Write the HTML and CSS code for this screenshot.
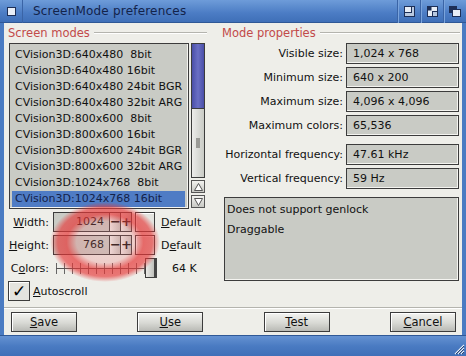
FILE: index.html
```html
<!DOCTYPE html>
<html lang="en">
<head>
    <meta charset="UTF-8">
    <title>ScreenMode preferences</title>
    <link rel="stylesheet" href="styles.css">
</head>
<body>
<div class="window">
    <div class="titlebar">
        <div class="gadget close"><span></span></div>
        <div class="title">ScreenMode preferences</div>
        <div class="gadget">
            <svg width="11" height="11" viewBox="0 0 11 11"><rect x="0.5" y="0.5" width="10" height="10" fill="#b9c9e0" stroke="#1d2f57"/><rect x="0.5" y="0.5" width="7" height="6" fill="#e8eef7" stroke="#1d2f57"/></svg>
        </div>
        <div class="gadget">
            <svg width="11" height="11" viewBox="0 0 11 11"><rect x="0.5" y="0.5" width="10" height="10" fill="#e8eef7" stroke="#1d2f57"/><rect x="0.5" y="0.5" width="4" height="4" fill="#1d2f57"/><rect x="5.5" y="5.5" width="5" height="5" fill="#b9c9e0" stroke="#1d2f57"/></svg>
        </div>
        <div class="gadget">
            <svg width="12" height="11" viewBox="0 0 12 11"><rect x="0.5" y="0.5" width="7" height="6" fill="#1d2f57" stroke="#1d2f57"/><rect x="3.5" y="3.5" width="8" height="7" fill="#e8eef7" stroke="#1d2f57"/></svg>
        </div>
    </div>

    <div class="content">
        <div class="columns">
            <div class="col-left">
                <div class="group-title"><span>Screen modes</span></div>
                <div class="list-wrap">
                    <ul class="modes">
                        <li>CVision3D:640x480&nbsp;&nbsp;8bit</li>
                        <li>CVision3D:640x480 16bit</li>
                        <li>CVision3D:640x480 24bit BGR</li>
                        <li>CVision3D:640x480 32bit ARG</li>
                        <li>CVision3D:800x600&nbsp;&nbsp;8bit</li>
                        <li>CVision3D:800x600 16bit</li>
                        <li>CVision3D:800x600 24bit BGR</li>
                        <li>CVision3D:800x600 32bit ARG</li>
                        <li>CVision3D:1024x768&nbsp;&nbsp;8bit</li>
                        <li class="selected">CVision3D:1024x768 16bit</li>
                    </ul>
                    <div class="scroller">
                        <div class="track">
                            <div class="knob"><span class="grip"></span></div>
                        </div>
                        <div class="arrow">
                            <svg width="11" height="10" viewBox="0 0 11 10"><path d="M5.5 1.5 L9.5 8.5 L1.5 8.5 Z" fill="#fff" stroke="#555"/></svg>
                        </div>
                        <div class="arrow">
                            <svg width="11" height="10" viewBox="0 0 11 10"><path d="M1.5 1.5 L9.5 1.5 L5.5 8.5 Z" fill="#fff" stroke="#555"/></svg>
                        </div>
                    </div>
                </div>

                <div class="field-row">
                    <label class="field-label"><u>W</u>idth:</label>
                    <div class="number-box">1024</div>
                    <div class="step">&minus;</div>
                    <div class="step">+</div>
                    <div class="small-box"></div>
                    <span class="default-text"><u>D</u>efault</span>
                </div>
                <div class="field-row">
                    <label class="field-label"><u>H</u>eight:</label>
                    <div class="number-box">768</div>
                    <div class="step">&minus;</div>
                    <div class="step">+</div>
                    <div class="small-box"></div>
                    <span class="default-text">D<u>e</u>fault</span>
                </div>
                <div class="field-row">
                    <label class="field-label">C<u>o</u>lors:</label>
                    <div class="slider">
                        <div class="ticks"></div>
                        <div class="slider-knob"></div>
                    </div>
                    <span class="colors-value">64 K</span>
                </div>
                <div class="check-row">
                    <div class="checkbox">&#10003;</div>
                    <span><u>A</u>utoscroll</span>
                </div>
            </div>

            <div class="col-right">
                <div class="group-title"><span>Mode properties</span></div>
                <div class="props">
                    <div class="prop"><span class="prop-label">Visible size:</span><div class="prop-value">1,024 x 768</div></div>
                    <div class="prop"><span class="prop-label">Minimum size:</span><div class="prop-value">640 x 200</div></div>
                    <div class="prop"><span class="prop-label">Maximum size:</span><div class="prop-value">4,096 x 4,096</div></div>
                    <div class="prop"><span class="prop-label">Maximum colors:</span><div class="prop-value">65,536</div></div>
                </div>
                <div class="props freq">
                    <div class="prop"><span class="prop-label">Horizontal frequency:</span><div class="prop-value">47.61 kHz</div></div>
                    <div class="prop"><span class="prop-label">Vertical frequency:</span><div class="prop-value">59 Hz</div></div>
                </div>
                <div class="info-box">
                    <p>Does not support genlock</p>
                    <p>Draggable</p>
                </div>
            </div>
        </div>

        <div class="buttons">
            <button class="btn"><u>S</u>ave</button>
            <button class="btn"><u>U</u>se</button>
            <button class="btn"><u>T</u>est</button>
            <button class="btn"><u>C</u>ancel</button>
        </div>
    </div>

    <div class="bottom-bar">
        <svg class="sizer" width="12" height="12" viewBox="0 0 12 12">
            <path d="M11 2 L2 11 M11 5 L5 11 M11 8 L8 11" stroke="#e6eef8" stroke-width="1.2"/>
            <path d="M11 3 L3 11 M11 6 L6 11 M11 9 L9 11" stroke="#1d2f57" stroke-width="0.8"/>
        </svg>
    </div>

    <!-- red highlight ring drawn over the screenshot -->
    <div class="ring"></div>
</div>
</body>
</html>
```

FILE: styles.css
```css
* {
    margin: 0;
    padding: 0;
    box-sizing: border-box;
}

body {
    font-family: "DejaVu Sans", sans-serif;
    font-size: 11px;
    color: #111;
    background: #4a7bc2;
}

.window {
    position: relative;
    width: 466px;
    height: 356px;
    overflow: hidden;
    background: #4a7bc2;
}

.titlebar {
    height: 23px;
    display: flex;
    align-items: center;
    background: linear-gradient(#6e9cd9, #4b7cc4 60%, #3f6fb8);
    border-bottom: 1px solid #2f5896;
}

.gadget {
    width: 23px;
    height: 23px;
    display: flex;
    align-items: center;
    justify-content: center;
    border-left: 1px solid #3a64a6;
    box-shadow: inset 1px 0 0 #7aa4dc;
}

.gadget.close {
    border-left: none;
    box-shadow: none;
    border-right: 1px solid #3a64a6;
}

.gadget.close span {
    width: 9px;
    height: 9px;
    background: #e8eef7;
    border: 1px solid #1d2f57;
}

.title {
    flex: 1;
    padding-left: 10px;
    font-size: 12px;
    color: #13234a;
    letter-spacing: 0.2px;
}

.content {
    height: 312px;
    margin: 0 4px;
    background: #eeeee9;
    display: flex;
    flex-direction: column;
}

.columns {
    display: flex;
    height: 281px;
    padding: 3px 0 0 4px;
    gap: 15px;
}

.col-left {
    width: 199px;
}

.col-right {
    width: 238px;
}

.group-title {
    height: 14px;
    line-height: 14px;
    display: flex;
    align-items: center;
    color: #c24a4a;
    font-size: 11.5px;
}

.group-title::after {
    content: "";
    flex: 1;
    height: 0;
    margin-left: 4px;
    border-top: 1px solid #b4b4ae;
    border-bottom: 1px solid #ffffff;
}

/* mode list */

.list-wrap {
    display: flex;
    gap: 2px;
    margin: 3px 0 0 1px;
}

.modes {
    list-style: none;
    width: 180px;
    height: 166px;
    padding: 3px 3px 1px 2px;
    background: #c9cbc5;
    border: 1px solid #3c3c3c;
    box-shadow: inset -1px -1px 0 #f4f4f0;
}

.modes li {
    height: 16px;
    line-height: 16px;
    padding-left: 3px;
    white-space: nowrap;
}

.modes li.selected {
    background: #4f7cc5;
    color: #14224a;
}

.scroller {
    width: 14px;
    display: flex;
    flex-direction: column;
    gap: 2px;
}

.track {
    height: 135px;
    display: flex;
    flex-direction: column;
    justify-content: flex-end;
    background: linear-gradient(90deg, #4a4fa8, #6a6fc4 50%, #4a4fa8);
    border: 1px solid #3c3c3c;
}

.knob {
    height: 69px;
    display: flex;
    align-items: center;
    justify-content: center;
    background: linear-gradient(90deg, #ececea, #c9cbc5);
    border-top: 1px solid #3c3c3c;
}

.grip {
    width: 4px;
    height: 10px;
    background-image: radial-gradient(circle, #9a9a96 0.8px, transparent 1px);
    background-size: 2px 2px;
}

.arrow {
    height: 13px;
    display: flex;
    align-items: center;
    justify-content: center;
    background: linear-gradient(#f2f2ef, #c8c9c4);
    border: 1px solid #555;
}

/* width / height / colors */

.field-row {
    display: flex;
    align-items: center;
    height: 20px;
    margin-top: 3px;
}

.field-row:first-of-type {
    margin-top: 4px;
}

.field-label {
    width: 45px;
    padding-right: 4px;
    text-align: right;
}

.number-box {
    width: 57px;
    height: 20px;
    line-height: 18px;
    padding-right: 5px;
    text-align: right;
    background: #c9cbc5;
    border: 1px solid #3c3c3c;
}

.step {
    width: 11px;
    height: 20px;
    line-height: 17px;
    text-align: center;
    font-weight: bold;
    font-size: 13px;
    background: linear-gradient(90deg, #f0f0ed, #c4c5c0);
    border: 1px solid #3c3c3c;
    border-left: none;
}

.small-box {
    width: 20px;
    height: 20px;
    margin-left: 3px;
    background: #e4e4df;
    border: 1px solid #3c3c3c;
    box-shadow: inset 1px 1px 0 #fff;
}

.default-text {
    margin-left: 6px;
}

.slider {
    position: relative;
    width: 101px;
    height: 20px;
    margin-left: 3px;
}

.ticks {
    position: absolute;
    left: 0;
    right: 10px;
    top: 5px;
    height: 11px;
    background:
        linear-gradient(#555, #555) 0 5px / 100% 1px no-repeat,
        repeating-linear-gradient(90deg, #666 0 1px, transparent 1px 8px);
}

.slider-knob {
    position: absolute;
    right: 0;
    top: 0;
    width: 12px;
    height: 20px;
    background: linear-gradient(90deg, #eaeae7, #bfc0bb);
    border: 1px solid #3c3c3c;
    border-right: 3px solid #444;
}

.colors-value {
    margin-left: 15px;
}

.check-row {
    display: flex;
    align-items: center;
    gap: 3px;
    margin-top: 3px;
}

.checkbox {
    width: 22px;
    height: 20px;
    line-height: 19px;
    text-align: center;
    font-size: 17px;
    font-weight: bold;
    color: #000;
    background: #e4e4df;
    border: 1px solid #3c3c3c;
    box-shadow: inset 1px 1px 0 #fff;
}

/* mode properties */

.props {
    display: flex;
    flex-direction: column;
    gap: 3px;
    margin-top: 3px;
}

.props.freq {
    margin-top: 8px;
}

.prop {
    display: flex;
    align-items: center;
    gap: 3px;
    height: 21px;
}

.prop-label {
    width: 121px;
    text-align: right;
    white-space: nowrap;
}

.prop-value {
    width: 113px;
    height: 21px;
    line-height: 19px;
    padding-left: 6px;
    background: #c9cbc5;
    border: 1px solid #3c3c3c;
    box-shadow: inset -1px -1px 0 #f4f4f0;
}

.info-box {
    width: 235px;
    height: 84px;
    margin: 8px 0 0 2px;
    padding: 3px 2px;
    background: #c9cbc5;
    border: 1px solid #3c3c3c;
    box-shadow: inset -1px -1px 0 #f4f4f0;
}

.info-box p {
    height: 20px;
    line-height: 18px;
}

/* buttons */

.buttons {
    display: flex;
    justify-content: space-between;
    margin-top: 3px;
    padding: 4px 6px 0 7px;
    border-top: 1px solid #b4b4ae;
    box-shadow: inset 0 1px 0 #fff;
}

.btn {
    width: 66px;
    height: 20px;
    font-family: "DejaVu Sans", sans-serif;
    font-size: 11.5px;
    color: #111;
    background: linear-gradient(#f4f4f1, #d8d9d4 55%, #b9bab5);
    border: 1px solid #3c3c3c;
    box-shadow: inset 1px 1px 0 #fff;
}

.bottom-bar {
    height: 21px;
    display: flex;
    justify-content: flex-end;
    align-items: flex-end;
    padding: 0 1px 1px 0;
    background: linear-gradient(#6592d2, #4a7bc2 50%, #3f6fb8);
    border-top: 1px solid #2f5896;
}

.ring {
    position: absolute;
    left: 50px;
    top: 202px;
    width: 110px;
    height: 80px;
    border-radius: 50%;
    background: radial-gradient(ellipse closest-side,
        rgba(235, 130, 130, 0.2) 0%,
        rgba(235, 110, 110, 0.25) 52%,
        rgba(230, 55, 55, 0.7) 70%,
        rgba(230, 55, 55, 0.65) 86%,
        rgba(230, 60, 60, 0) 100%);
    pointer-events: none;
}
```
